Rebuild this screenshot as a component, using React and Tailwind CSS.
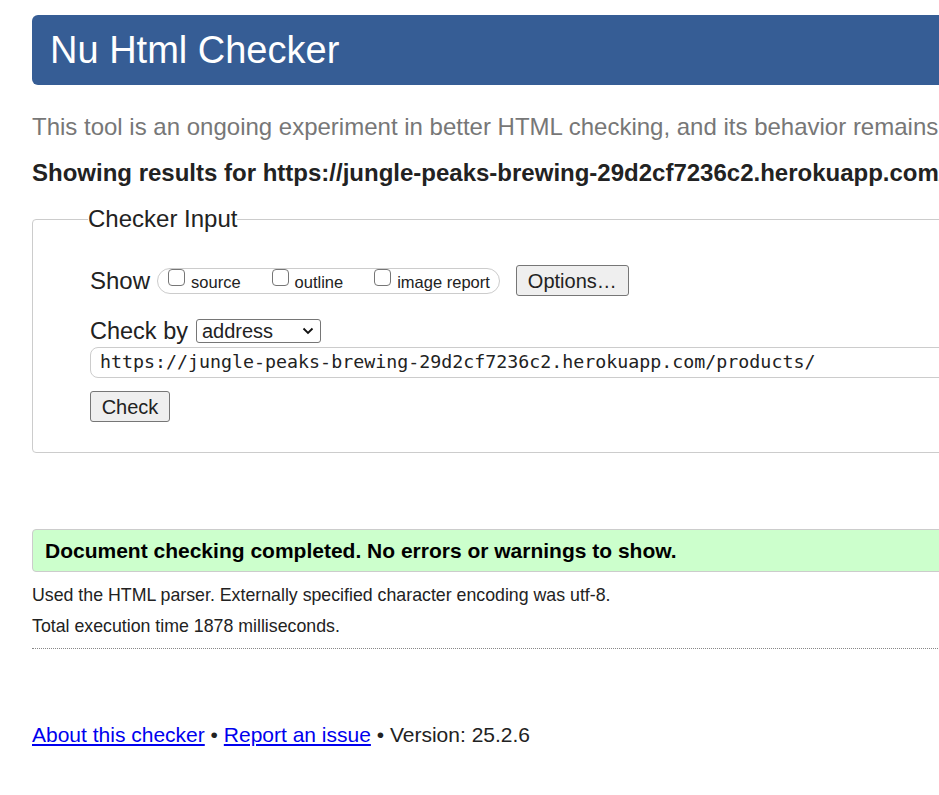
import React from "react";

const CheckBox = ({ label }) => (
  <label className="flex items-start gap-[6px]">
    <span className="mt-0 h-[17px] w-[17px] rounded-[4px] border border-[#767676] bg-white" />
    <span className="pt-[3px] text-[16.5px] leading-[21px]">{label}</span>
  </label>
);

const App = () => {
  return (
    <div className="min-h-screen w-full overflow-hidden bg-white text-[#222] font-['Liberation_Sans',Arial,sans-serif]">
      <div className="w-[1400px] pl-[32px]">
        <header className="mt-[15px] flex h-[70px] items-center rounded-[6px] bg-[#365d95] pl-[18px]">
          <h1 className="text-[38px] leading-none text-white">Nu Html Checker</h1>
        </header>

        <p className="mt-[28px] whitespace-nowrap text-[24px] leading-[28px] text-[#777]">
          This tool is an ongoing experiment in better HTML checking, and its behavior remains
          subject to change
        </p>

        <p className="mt-[18px] whitespace-nowrap text-[24px] font-bold leading-[28px]">
          Showing results for https://jungle-peaks-brewing-29d2cf7236c2.herokuapp.com/products/
        </p>

        <fieldset className="mt-[18px] rounded-[4px] border border-[#ccc] pb-[30px] pl-[57px]">
          <legend className="-ml-[2px] text-[24px] leading-[28px]">Checker Input</legend>

          <div className="mt-[32px] flex h-[31px] items-center">
            <span className="text-[24px] leading-[28px]">Show</span>
            <div className="ml-[7px] flex h-[26px] items-start gap-[31px] rounded-full border border-[#ccc] pl-[10px] pr-[9px]">
              <CheckBox label="source" />
              <CheckBox label="outline" />
              <CheckBox label="image report" />
            </div>
            <button className="ml-[16px] h-[31px] rounded-[3px] border border-[#767676] bg-[#efefef] px-[11px] text-[20px] leading-none">
              Options…
            </button>
          </div>

          <div className="mt-[21px] flex h-[28px] items-center">
            <span className="text-[23.5px] leading-[28px]">Check by</span>
            <div className="ml-[8px] flex h-[24px] w-[125px] items-center justify-between rounded-[3px] border border-[#767676] pl-[5px] pr-[6px]">
              <span className="text-[20px] leading-none">address</span>
              <svg width="12" height="8" viewBox="0 0 12 8" fill="none">
                <path d="M1.5 1.5 L6 6 L10.5 1.5" stroke="#111" strokeWidth="1.8" />
              </svg>
            </div>
          </div>

          <div className="mt-[2px] flex h-[31px] items-center rounded-[8px] border border-[#ccc] pl-[9px]">
            <span className="whitespace-nowrap font-['DejaVu_Sans_Mono',monospace] text-[18.3px] leading-none">
              https://jungle-peaks-brewing-29d2cf7236c2.herokuapp.com/products/
            </span>
          </div>

          <button className="mt-[13px] h-[31px] w-[80px] rounded-[3px] border border-[#767676] bg-[#efefef] text-[20px] leading-none">
            Check
          </button>
        </fieldset>

        <div className="mt-[76px] flex h-[43px] items-center rounded-[4px] border border-[#ccc] bg-[#ccffcc] pl-[12px]">
          <p className="text-[21px] font-bold leading-none text-black">
            Document checking completed. No errors or warnings to show.
          </p>
        </div>

        <p className="mt-[8px] text-[17.75px] leading-[31px]">
          Used the HTML parser. Externally specified character encoding was utf-8.
        </p>
        <p className="text-[17.75px] leading-[31px]">Total execution time 1878 milliseconds.</p>

        <div className="mt-[6px] border-t border-dotted border-[#888]" />

        <footer className="mt-[71px] text-[21px] leading-[30px]">
          <a href="#" className="text-[#0000ee] underline">
            About this checker
          </a>{" "}
          •{" "}
          <a href="#" className="text-[#0000ee] underline">
            Report an issue
          </a>{" "}
          • Version: 25.2.6
        </footer>
      </div>
    </div>
  );
};

export default App;
